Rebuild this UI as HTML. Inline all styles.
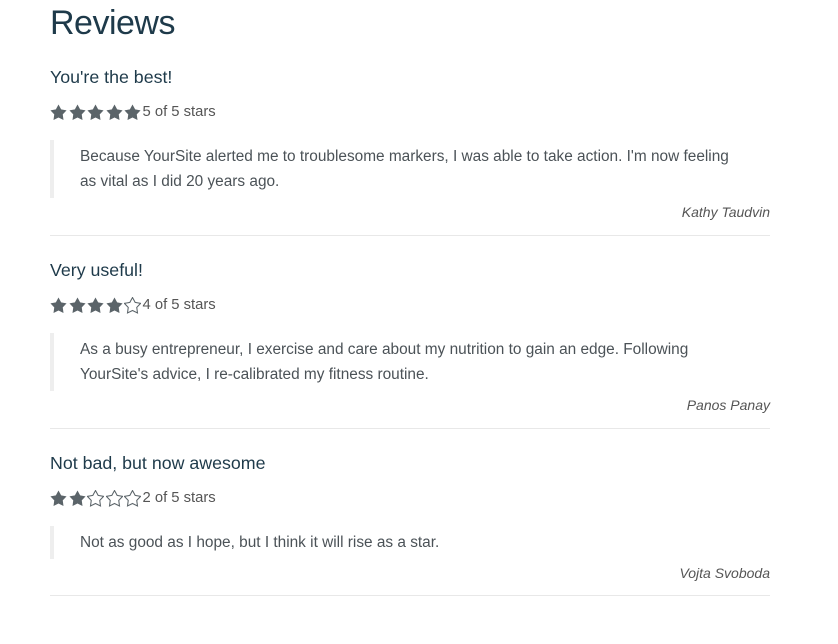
<!DOCTYPE html>
<html><head><style>
*{margin:0;padding:0;box-sizing:border-box}
body{width:838px;height:630px;background:#fff;font-family:"Liberation Sans",sans-serif;color:#4b5257;position:relative;overflow:hidden}
h1{position:absolute;left:50px;top:4px;font-size:34px;font-weight:normal;color:#1e3a4a;letter-spacing:-0.5px}
.sec{position:absolute;left:50px;width:720px;height:193px}
.h{position:absolute;top:0;left:0;font-size:17.8px;color:#1e3a4a;line-height:24px}
.st{position:absolute;top:37px;left:0;font-size:14.8px;line-height:20px;display:flex;align-items:center;color:#555}
.st svg{width:17px;height:17px;margin-right:1.5px}
.bq{position:absolute;top:75px;left:0;width:720px;border-left:4px solid #eee;padding:4px 0 4px 26px;font-size:15.4px;line-height:25px;color:#4b5257}
.au{position:absolute;right:0;font-size:14px;font-style:italic;color:#555;line-height:20px}
.hr{position:absolute;left:0;width:720px;border-top:1px solid #e8e8e8}
</style></head><body>
<svg width="0" height="0" style="position:absolute"><defs>
<path id="s" d="M8 0.5L10.5 5.1L15.6 6L12 9.8L12.7 15L8 12.7L3.3 15L4 9.8L0.4 6L5.5 5.1Z"/>
</defs></svg>
<h1>Reviews</h1>

<div class="sec" style="top:65px">
<div class="h">You're the best!</div>
<div class="st">
<svg viewBox="0 0 16 16"><use href="#s" fill="#5b6469"/></svg><svg viewBox="0 0 16 16"><use href="#s" fill="#5b6469"/></svg><svg viewBox="0 0 16 16"><use href="#s" fill="#5b6469"/></svg><svg viewBox="0 0 16 16"><use href="#s" fill="#5b6469"/></svg><svg viewBox="0 0 16 16"><use href="#s" fill="#5b6469"/></svg>5 of 5 stars</div>
<div class="bq">Because YourSite alerted me to troublesome markers, I was able to take action. I'm now feeling<br>as vital as I did 20 years ago.</div>
<div class="au" style="top:137px">Kathy Taudvin</div>
<div class="hr" style="top:170px"></div>
</div>

<div class="sec" style="top:258px">
<div class="h">Very useful!</div>
<div class="st">
<svg viewBox="0 0 16 16"><use href="#s" fill="#5b6469"/></svg><svg viewBox="0 0 16 16"><use href="#s" fill="#5b6469"/></svg><svg viewBox="0 0 16 16"><use href="#s" fill="#5b6469"/></svg><svg viewBox="0 0 16 16"><use href="#s" fill="#5b6469"/></svg><svg viewBox="0 0 16 16"><use href="#s" fill="none" stroke="#5b6469" stroke-width="1"/></svg>4 of 5 stars</div>
<div class="bq">As a busy entrepreneur, I exercise and care about my nutrition to gain an edge. Following<br>YourSite's advice, I re-calibrated my fitness routine.</div>
<div class="au" style="top:137px">Panos Panay</div>
<div class="hr" style="top:170px"></div>
</div>

<div class="sec" style="top:451px">
<div class="h">Not bad, but now awesome</div>
<div class="st">
<svg viewBox="0 0 16 16"><use href="#s" fill="#5b6469"/></svg><svg viewBox="0 0 16 16"><use href="#s" fill="#5b6469"/></svg><svg viewBox="0 0 16 16"><use href="#s" fill="none" stroke="#5b6469" stroke-width="1"/></svg><svg viewBox="0 0 16 16"><use href="#s" fill="none" stroke="#5b6469" stroke-width="1"/></svg><svg viewBox="0 0 16 16"><use href="#s" fill="none" stroke="#5b6469" stroke-width="1"/></svg>2 of 5 stars</div>
<div class="bq">Not as good as I hope, but I think it will rise as a star.</div>
<div class="au" style="top:112px">Vojta Svoboda</div>
<div class="hr" style="top:144px"></div>
</div>
</body></html>
